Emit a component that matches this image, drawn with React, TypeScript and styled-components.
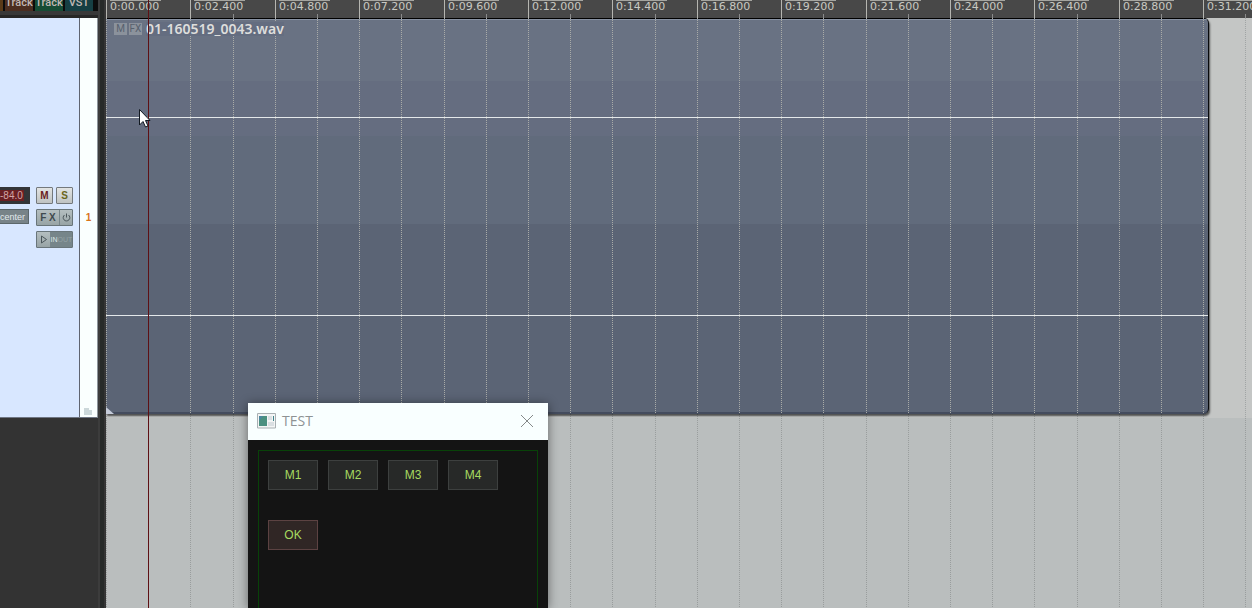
import React from "react";
import styled, { createGlobalStyle } from "styled-components";

const HALF = 42.2;
const COUNT = 28;
const steps = Array.from({ length: COUNT }, (_, i) => ({
  major: i % 2 === 0,
  width: Math.round((i + 1) * HALF) - Math.round(i * HALF),
  label: timeLabel(i * 1.2),
}));

function timeLabel(seconds: number) {
  return "0:" + seconds.toFixed(3).padStart(6, "0");
}

const Global = createGlobalStyle`
  * { box-sizing: border-box; }
  html, body, #root { height: 100%; margin: 0; }
  body { overflow: hidden; background: #333; font-family: "Liberation Sans", Arial, sans-serif; }
  button, input { font: inherit; padding: 0; margin: 0; }
`;

const Workspace = styled.div`
  position: relative;
  display: flex;
  height: 100vh;
  overflow: hidden;
`;

const Sidebar = styled.aside`
  flex: none;
  width: 98px;
  display: flex;
  flex-direction: column;
  background: #333333;
`;

const TabStrip = styled.div`
  display: flex;
  height: 18px;
  padding-bottom: 7px;
  gap: 2px;
  background: linear-gradient(#0c0c0c 11px, #383838 11px 15px, #262626 15px);
`;

const Tab = styled.button<{ $bg: string; $w: number }>`
  display: flex;
  justify-content: center;
  flex: none;
  width: ${(p) => p.$w}px;
  height: 11px;
  border: 0;
  background: ${(p) => p.$bg};
  color: #c0b8b4;
  font-family: Roboto, sans-serif;
  font-size: 11px;
  font-weight: 500;
  line-height: 5px;
  white-space: nowrap;
`;

const Track = styled.section`
  display: flex;
  height: 400px;
  border-bottom: 1px solid #6f7683;
  border-right: 1px solid #8d959c;
`;

const TrackControls = styled.div`
  flex: 1;
  display: flex;
  flex-direction: column;
  gap: 5px;
  padding: 169px 6px 0 0;
  background: #d8e7ff;
`;

const ControlRow = styled.div`
  display: flex;
  height: 17px;
  justify-content: flex-end;
`;

const Readout = styled.output<{ $dark?: boolean }>`
  flex: 1;
  height: ${(p) => (p.$dark ? 17 : 15)}px;
  margin-right: ${(p) => (p.$dark ? 6 : 7)}px;
  border: ${(p) => (p.$dark ? "3px solid #333538" : "1px solid #5c676b")};
  border-right-width: ${(p) => (p.$dark ? 6 : 1)}px;
  border-left: 0;
  background: ${(p) => (p.$dark ? "#6b2024" : "#788388")};
  color: ${(p) => (p.$dark ? "#d3a5a5" : "#e2eaec")};
  font-size: ${(p) => (p.$dark ? 10 : 9)}px;
  line-height: ${(p) => (p.$dark ? 11 : 14)}px;
  white-space: nowrap;
`;

const TogglePair = styled.div`
  display: flex;
  gap: 3px;
`;

const Toggle = styled.button<{ $color: string }>`
  width: 17px;
  height: 17px;
  border: 1px solid #74797d;
  border-radius: 1px;
  background: linear-gradient(#e2e4e4, #bfc3c3);
  color: ${(p) => p.$color};
  font-size: 10px;
  font-weight: 700;
  line-height: 15px;
`;

const Split = styled.div`
  display: flex;
  width: 37px;
  height: 17px;
  border: 1px solid #69757a;
  border-radius: 1px;
  background: #76858a;
`;

const SplitButton = styled.button<{ $w: number; $dim?: boolean }>`
  display: flex;
  align-items: center;
  justify-content: center;
  flex: none;
  width: ${(p) => p.$w}px;
  border: 0;
  border-right: 1px solid #78868a;
  background: ${(p) => (p.$dim ? "#76858a" : "linear-gradient(#b4bec0, #98a4a6)")};
  color: ${(p) => (p.$dim ? "#dce6e8" : "#3f4a4f")};
  font-size: ${(p) => (p.$dim ? 7 : 10)}px;
  font-weight: ${(p) => (p.$dim ? 400 : 700)};
  white-space: pre;
  &:last-child { border-right: 0; }
`;

const Faint = styled.span`
  color: #94a2a5;
`;

const TrackIndex = styled.div`
  display: flex;
  flex-direction: column;
  align-items: center;
  width: 18px;
  padding: 194px 0 2px;
  border-left: 1px solid #5f6470;
  background: #fafffe;
  color: #d9741a;
  font-size: 10px;
  font-weight: 700;
  line-height: 12px;
`;

const Folder = styled.svg`
  display: block;
  margin-top: auto;
`;

const Divider = styled.div`
  flex: none;
  width: 8px;
  background: linear-gradient(90deg, #3c3c3c 2px, #272a29 2px 6px, #353535 6px);
`;

const Arrange = styled.main`
  position: relative;
  flex: 1;
  min-width: 0;
  display: flex;
  flex-direction: column;
  overflow: hidden;
`;

const Ruler = styled.div`
  flex: none;
  display: flex;
  height: 18px;
  background: #484848;
`;

const RulerStep = styled.div<{ $major: boolean }>`
  flex: none;
  height: 18px;
  ${(p) =>
    p.$major
      ? "border-left: 1px solid #b5b5b0; padding-left: 3px;"
      : "background: linear-gradient(#8a8a8a, #8a8a8a) 0 100% / 1px 4px no-repeat;"}
`;

const Label = styled.span`
  display: block;
  width: 51px;
  border-top: 1px solid #a5a5a0;
  color: #c8c8c2;
  font-family: "DejaVu Sans", Verdana, sans-serif;
  font-size: 11px;
  line-height: 12px;
  white-space: nowrap;
`;

const Lane = styled.div`
  position: relative;
  flex: none;
  height: 400px;
  background: #c4c6c5;
`;

const EmptyLane = styled.div`
  position: relative;
  flex: 1;
  background: #babebe;
`;

const GridOverlay = styled.div`
  position: absolute;
  inset: 0;
  display: flex;
  overflow: hidden;
  pointer-events: none;
`;

const GridStep = styled.div<{ $color: string }>`
  flex: none;
  height: 100%;
  background: repeating-linear-gradient(${(p) => p.$color} 0 1px, transparent 1px 2px) 0 0 / 1px 100% no-repeat;
`;

const Clip = styled.article`
  position: relative;
  display: flex;
  flex-direction: column;
  height: 396px;
  margin-right: 43px;
  border-right: 1px solid #08090b;
  border-radius: 0 5px 5px 0;
  background: linear-gradient(#000 1px, #8791a1 1px 2px, #697283 2px 63px, #656d80 63px 118px, #616b7c 118px 206px, #5b6475 206px);
  box-shadow: inset 0 -2px #444c5e, 1px 2px 2px #0009;
`;

const ClipHeader = styled.header`
  position: absolute;
  z-index: 1;
  top: 3px;
  left: 8px;
  display: flex;
  align-items: center;
  gap: 2px;
  height: 15px;
`;

const ClipBadge = styled.button`
  width: 13px;
  height: 12px;
  border: 0;
  background: #8b929c;
  color: #58616e;
  font-family: Roboto, sans-serif;
  font-size: 10px;
  line-height: 12px;
`;

const ClipName = styled.span`
  margin-left: 2px;
  background: #646d80;
  color: #dededc;
  font-family: "Noto Sans", sans-serif;
  font-size: 14px;
  font-weight: 600;
  line-height: 14px;
`;

const Channel = styled.div`
  flex: 1;
  display: flex;
  align-items: center;
`;

const Silence = styled.div`
  width: 100%;
  height: 1px;
  background: #e4e8ea;
`;

const FadeHandle = styled.svg`
  position: absolute;
  left: 0;
  bottom: 0;
`;

const Playhead = styled.div`
  position: absolute;
  z-index: 2;
  top: 0;
  bottom: 0;
  left: 42px;
  width: 1px;
  background: #5e1014;
`;

const Pointer = styled.svg`
  position: absolute;
  z-index: 3;
  left: 138px;
  top: 108px;
`;

const Dialog = styled.section`
  position: absolute;
  z-index: 4;
  left: 248px;
  top: 403px;
  bottom: 0;
  width: 300px;
  display: flex;
  flex-direction: column;
  background: #141414;
  box-shadow: 0 1px 10px #0007;
`;

const TitleBar = styled.header`
  flex: none;
  display: flex;
  align-items: center;
  gap: 6px;
  height: 37px;
  padding: 0 14px 2px 9px;
  background: #f9ffff;
`;

const Title = styled.h1`
  flex: 1;
  margin: 0;
  color: #8e9294;
  font-family: "Open Sans", sans-serif;
  font-size: 14px;
  font-weight: 400;
  line-height: 20px;
`;

const Close = styled.button`
  display: flex;
  border: 0;
  background: transparent;
`;

const Frame = styled.div`
  flex: 1;
  margin: 10px 10px 0;
  padding: 9px;
  border: 1px solid #084208;
  border-bottom: 0;
  display: flex;
  flex-direction: column;
  gap: 30px;
`;

const ButtonRow = styled.div`
  display: flex;
  gap: 10px;
`;

const PadButton = styled.button<{ $warm?: boolean }>`
  width: 50px;
  height: 30px;
  border: 1px solid ${(p) => (p.$warm ? "#5c4242" : "#3d403f")};
  background: ${(p) => (p.$warm ? "#302625" : "#272928")};
  color: #a6da60;
  font-size: 12px;
  line-height: 28px;
`;

function Grid({ color }: { color: string }) {
  return (
    <GridOverlay>
      {steps.map((s, i) => (
        <GridStep key={i} $color={color} style={{ width: s.width }} />
      ))}
    </GridOverlay>
  );
}

export default function App() {
  return (
    <>
      <Global />
      <Workspace>
        <Sidebar>
          <TabStrip>
            <Tab $bg="#5a3a18" $w={3} aria-label="Actions" />
            <Tab $bg="#4b2d20" $w={28}>Track</Tab>
            <Tab $bg="#164c34" $w={28}>Track</Tab>
            <Tab $bg="#163f43" $w={28}>VST</Tab>
          </TabStrip>
          <Track>
            <TrackControls>
              <ControlRow>
                <Readout $dark>-84.0</Readout>
                <TogglePair>
                  <Toggle $color="#6b1c22">M</Toggle>
                  <Toggle $color="#6a661c">S</Toggle>
                </TogglePair>
              </ControlRow>
              <ControlRow>
                <Readout>center</Readout>
                <Split>
                  <SplitButton $w={23}>F X</SplitButton>
                  <SplitButton $w={12} aria-label="Bypass effects">
                    <svg width="9" height="9" viewBox="0 0 9 9" fill="none" stroke="#4b565b">
                      <path d="M2.5 2A3.3 3.3 0 1 0 6.5 2M4.5 .5V4.5" />
                    </svg>
                  </SplitButton>
                </Split>
              </ControlRow>
              <ControlRow>
                <Split>
                  <SplitButton $w={14} aria-label="Input monitor">
                    <svg width="8" height="9" viewBox="0 0 8 9" fill="none" stroke="#4b565b">
                      <path d="M1.5 1V8L6.5 4.5Z" />
                    </svg>
                  </SplitButton>
                  <SplitButton $w={21} $dim>IN<Faint>OUT</Faint></SplitButton>
                </Split>
              </ControlRow>
            </TrackControls>
            <TrackIndex>
              1
              <Folder width="9" height="8" viewBox="0 0 9 8">
                <path d="M0 1H5V3H8V8H0Z" fill="#ccd8da" />
              </Folder>
            </TrackIndex>
          </Track>
        </Sidebar>
        <Divider />
        <Arrange>
          <Ruler>
            {steps.map((s, i) => (
              <RulerStep key={i} $major={s.major} style={{ width: s.width }}>
                {s.major && <Label>{s.label}</Label>}
              </RulerStep>
            ))}
          </Ruler>
          <Lane>
            <Grid color="#a0a4a4" />
            <Clip>
              <Grid color="#a9aba8" />
              <ClipHeader>
                <ClipBadge>M</ClipBadge>
                <ClipBadge>FX</ClipBadge>
                <ClipName>01-160519_0043.wav</ClipName>
              </ClipHeader>
              <Channel><Silence /></Channel>
              <Channel><Silence /></Channel>
              <FadeHandle width="8" height="7" viewBox="0 0 8 7">
                <path d="M0 0L8 7H0Z" fill="#c5ccda" />
              </FadeHandle>
            </Clip>
          </Lane>
          <EmptyLane>
            <Grid color="#999d9d" />
          </EmptyLane>
          <Playhead />
        </Arrange>
        <Pointer width="13" height="20" viewBox="0 0 13 20">
          <path d="M1.5 1.5V17L5 13.5L7.5 19L10 18L7.5 12.5H12Z" fill="#fff" stroke="#111820" />
        </Pointer>
        <Dialog>
          <TitleBar>
            <svg width="19" height="16" viewBox="0 0 19 16">
              <path d="M.5 .5H18.5V15H.5Z" fill="#f3f5f5" stroke="#a9b0b3" />
              <path d="M2 3H10V13H2Z" fill="#4b9080" />
              <path d="M2 3H6L2 8Z" fill="#4c86a0" />
              <path d="M11 3H15V7H11ZM11 9H17V13H11Z" fill="#dadfe2" />
              <path d="M16 3H17V8H16Z" fill="#3e8289" />
            </svg>
            <Title>TEST</Title>
            <Close aria-label="Close">
              <svg width="14" height="14" viewBox="0 0 14 14" stroke="#858989" fill="none">
                <path d="M1 1L13 13M13 1L1 13" />
              </svg>
            </Close>
          </TitleBar>
          <Frame>
            <ButtonRow>
              <PadButton>M1</PadButton>
              <PadButton>M2</PadButton>
              <PadButton>M3</PadButton>
              <PadButton>M4</PadButton>
            </ButtonRow>
            <ButtonRow>
              <PadButton $warm>OK</PadButton>
            </ButtonRow>
          </Frame>
        </Dialog>
      </Workspace>
    </>
  );
}
